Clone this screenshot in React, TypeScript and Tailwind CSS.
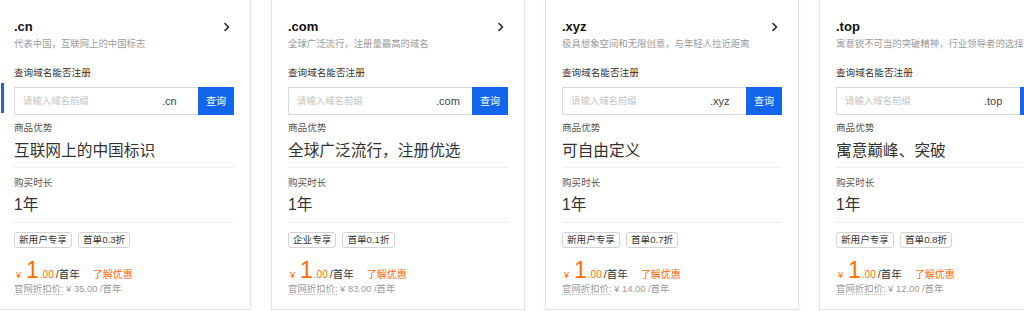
const domains = [
  {
    tld: '.cn',
    desc: '代表中国，互联网上的中国标志',
    adv: '互联网上的中国标识',
    tags: ['新用户专享', '首单0.3折'],
    orig: '35.00',
  },
  {
    tld: '.com',
    desc: '全球广泛流行，注册量最高的域名',
    adv: '全球广泛流行，注册优选',
    tags: ['企业专享', '首单0.1折'],
    orig: '83.00',
  },
  {
    tld: '.xyz',
    desc: '极具想象空间和无限创意，与年轻人拉近距离',
    adv: '可自由定义',
    tags: ['新用户专享', '首单0.7折'],
    orig: '14.00',
  },
  {
    tld: '.top',
    desc: '寓意锐不可当的突破精神，行业领导者的选择',
    adv: '寓意巅峰、突破',
    tags: ['新用户专享', '首单0.8折'],
    orig: '12.00',
  },
]

type Domain = (typeof domains)[number]

function Chevron() {
  return (
    <svg width="8" height="10" viewBox="0 0 8 10" fill="none">
      <path d="M2 1.5 L5.5 5 L2 8.5" stroke="#222" strokeWidth="1.6" strokeLinecap="round" strokeLinejoin="round" />
    </svg>
  )
}

function DomainCard({ d, first }: { d: Domain; first?: boolean }) {
  return (
    <div className="relative w-[254px] h-[316px] shrink-0 border border-t-0 border-[#e4e4e4] bg-white shadow-[0_0_3px_rgba(0,0,0,0.07)] pl-4 pr-4 pt-[24px]">
      {first && <div className="absolute left-[3px] top-[89px] w-[3px] h-[30px] bg-[#1366ec]" />}
      <div className="flex items-center justify-between h-[18px] pr-[3px]">
        <span className="text-[13px] font-bold leading-[18px] text-[#111]">{d.tld}</span>
        <Chevron />
      </div>
      <div className="h-[16px] leading-[16px] text-[9.4px] text-[#9a9a9a] whitespace-nowrap">{d.desc}</div>

      <div className="mt-[13px] h-[16px] leading-[16px] text-[9.6px] text-[#333]">查询域名能否注册</div>
      <div className="mt-[6px] flex h-[28px]">
        <div className="flex flex-1 items-center border border-r-0 border-[#d6d9e0]">
          <span className="flex-1 pl-[8px] text-[9.4px] text-[#c4c4c4]">请输入域名前缀</span>
          <span className="w-[36px] text-[11px] text-[#444]">{d.tld}</span>
        </div>
        <div className="flex w-[36px] items-center justify-center bg-[#1366ec] text-[10px] text-white">查询</div>
      </div>

      <div className="mt-[5px] h-[16px] leading-[16px] text-[9.6px] text-[#555]">商品优势</div>
      <div className="mt-[4px] h-[22px] leading-[22px] text-[15.7px] text-[#333] whitespace-nowrap">{d.adv}</div>
      <div className="mt-[5px] border-t border-[#eeeeee]" />

      <div className="mt-[7px] h-[16px] leading-[16px] text-[9.6px] text-[#555]">购买时长</div>
      <div className="mt-[3px] h-[22px] leading-[22px] text-[15.7px] text-[#333]">1年</div>
      <div className="mt-[6px] border-t border-[#eeeeee]" />

      <div className="mt-[9px] flex gap-[6px]">
        {d.tags.map((t) => (
          <span key={t} className="h-[16px] rounded-[3px] border border-[#d3d3d3] px-[4px] text-[9.6px] leading-[14px] text-[#333]">
            {t}
          </span>
        ))}
      </div>

      <div className="mt-[10px] flex h-[24px] items-baseline whitespace-nowrap">
        <span className="ml-[2px] text-[9px] text-[#ff6a00]">¥</span>
        <span className="ml-[5px] text-[23px] leading-[24px] text-[#ff6a00]">1</span>
        <span className="ml-[1px] text-[10px] text-[#ff6a00]">.00</span>
        <span className="ml-[2px] text-[10.5px] text-[#333]">/首年</span>
        <span className="ml-[13px] text-[10px] text-[#ff6a00]">了解优惠</span>
      </div>
      <div className="h-[14px] leading-[14px] text-[9.4px] text-[#9a9a9a] whitespace-nowrap">
        <span className="border-b border-dotted border-[#bbb]">官网折扣价:</span> ¥ {d.orig} /首年
      </div>
    </div>
  )
}

export default function App() {
  return (
    <div className="w-[1024px] h-[311px] overflow-hidden bg-white font-['Liberation_Sans','Noto_Sans_CJK_SC',sans-serif]">
      <div className="-mt-[6px] -ml-[3px] flex gap-[20px]">
        {domains.map((d, i) => (
          <DomainCard key={d.tld} d={d} first={i === 0} />
        ))}
      </div>
    </div>
  )
}
